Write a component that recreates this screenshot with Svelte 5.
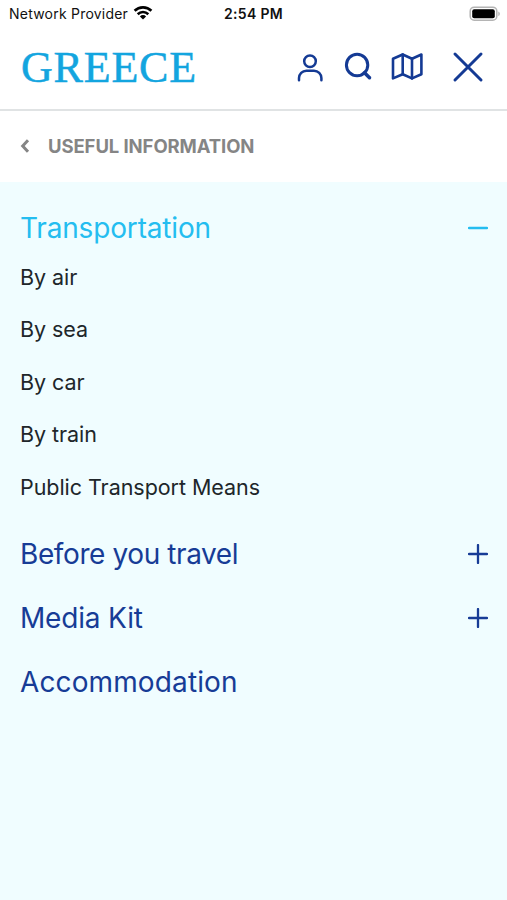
<script lang="ts">
  interface Section {
    title: string;
    expandable: boolean;
    fit: "snug" | "tight" | "loose";
    links: string[];
  }

  const sections: Section[] = [
    {
      title: "Transportation",
      expandable: true,
      fit: "snug",
      links: ["By air", "By sea", "By car", "By train", "Public Transport Means"],
    },
    { title: "Before you travel", expandable: true, fit: "tight", links: [] },
    { title: "Media Kit", expandable: true, fit: "snug", links: [] },
    { title: "Accommodation", expandable: false, fit: "loose", links: [] },
  ];

  let open = $state("Transportation");

  function toggle(title: string) {
    open = open === title ? "" : title;
  }
</script>

<div class="screen">
  <div class="status">
    <div class="carrier">
      <span>Network Provider</span>
      <svg width="20" height="15" viewBox="0 0 20 15" fill="none" stroke="#000" stroke-width="2.6">
        <path d="M1.6 5.8a12 12 0 0 1 16.8 0" />
        <path d="M4.7 9.2a7.6 7.6 0 0 1 10.6 0" />
        <path d="M10 14.4 6.9 11.4a4.4 4.4 0 0 1 6.2 0z" fill="#000" stroke="none" />
      </svg>
    </div>
    <span class="time">2:54 PM</span>
    <svg class="battery" width="32" height="16" viewBox="0 0 32 16">
      <rect x="1.2" y="1.2" width="26.6" height="13" rx="4" fill="#fff" stroke="#b4b4b4" stroke-width="1.5" />
      <rect x="3.2" y="3.2" width="22.6" height="9" rx="2" fill="#000" />
      <path d="M29.3 5.4c2 .8 2 3.8 0 4.6z" fill="#b4b4b4" />
    </svg>
  </div>

  <header>
    <div class="logo">GREECE</div>
    <nav>
      <button aria-label="Account">
        <svg width="28" height="32" viewBox="0 0 28 32" stroke-width="2.5">
          <circle cx="14" cy="10.2" r="5.8" />
          <path d="M3 29.3v-2.2a7.4 7.4 0 0 1 7.4-7.4h7.6a7.4 7.4 0 0 1 7.4 7.4v2.2" />
        </svg>
      </button>
      <button class="search" aria-label="Search">
        <svg width="28" height="32" viewBox="0 0 28 32" stroke-width="3">
          <circle cx="13.1" cy="14" r="10.7" />
          <path d="m20.5 21.7 5 5" stroke-width="3.5" />
        </svg>
      </button>
      <button class="map" aria-label="Map">
        <svg width="34" height="32" viewBox="0 0 34 32" stroke-width="2.6">
          <path d="M3 7.7 12.7 3.5l9.3 4.2L31.4 3.5v19.7L22 27.4l-9.3-4.2L3 27.4z" />
          <path d="M12.7 3.5v19.7M22 7.7v19.7" />
        </svg>
      </button>
      <button class="close" aria-label="Close">
        <svg width="32" height="32" viewBox="0 0 32 32" stroke-width="3">
          <path d="m3 3 26 26M29 3 3 29" />
        </svg>
      </button>
    </nav>
  </header>

  <div class="crumb">
    <svg width="10" height="14" viewBox="0 0 10 14" fill="none" stroke="#858585" stroke-width="3">
      <path d="M8 1.3 2.7 7 8 12.7" />
    </svg>
    <span>USEFUL INFORMATION</span>
  </div>

  <main>
    {#each sections as section (section.title)}
      {@const expanded = open === section.title}
      <section>
        <button class="heading" class:expanded onclick={() => toggle(section.title)}>
          <span class={section.fit}>{section.title}</span>
          {#if section.expandable}
            <svg width="20" height="20" viewBox="0 0 20 20" stroke-width="2.3">
              <path d={expanded ? "M1 10h18" : "M1 10h18M10 1v18"} />
            </svg>
          {/if}
        </button>
        {#if expanded && section.links.length}
          <ul>
            {#each section.links as link}
              <li>{link}</li>
            {/each}
          </ul>
        {/if}
      </section>
    {/each}
  </main>
</div>

<style>
  :global(body) {
    background: #fff;
  }
  .screen {
    display: flex;
    flex-direction: column;
    height: 900px;
    overflow: hidden;
    font-family: Inter, "Liberation Sans", sans-serif;
    color: #20262a;
  }
  button {
    display: flex;
    padding: 0;
    border: 0;
    background: none;
    font: inherit;
    color: inherit;
    cursor: pointer;
  }
  svg {
    display: block;
    flex: none;
  }
  button svg {
    fill: none;
    stroke: currentColor;
    stroke-linecap: round;
    stroke-linejoin: round;
  }

  .status {
    display: grid;
    grid-template-columns: 1fr auto 1fr;
    align-items: center;
    height: 27px;
    padding: 0 6px 0 9px;
    box-sizing: border-box;
    font-size: 14px;
    color: #111;
  }
  .carrier {
    display: flex;
    gap: 5px;
    letter-spacing: 0.22px;
  }
  .time {
    margin-right: 3px;
    font-weight: 600;
    letter-spacing: 0.3px;
  }
  .battery {
    justify-self: end;
  }

  header {
    display: flex;
    align-items: center;
    justify-content: space-between;
    height: 84px;
    padding: 0 23px 3px 21px;
    box-sizing: border-box;
    border-bottom: 2px solid #e0e3e4;
  }
  .logo {
    padding-top: 3px;
    font-family: "Liberation Serif", serif;
    font-size: 44px;
    line-height: 50px;
    letter-spacing: 0.8px;
    color: #13a5df;
    -webkit-text-stroke: 0.5px #13a5df;
  }
  nav {
    display: flex;
    align-items: center;
    color: #143a94;
  }
  .search {
    margin-left: 20px;
  }
  .map {
    margin-left: 18px;
  }
  .close {
    margin-left: 28px;
  }

  .crumb {
    display: flex;
    align-items: center;
    gap: 18px;
    height: 71px;
    padding: 0 0 2px 20px;
    box-sizing: border-box;
    font-size: 18.5px;
    font-weight: 700;
    letter-spacing: -0.09px;
    color: #858585;
  }

  main {
    flex: 1;
    padding: 14px 19px 0 20px;
    background: #f0fdff;
  }
  .heading {
    align-items: center;
    justify-content: space-between;
    width: 100%;
    height: 63.6px;
    font-size: 28px;
    color: #173c96;
  }
  .heading.expanded {
    color: #24bdf0;
  }
  .snug {
    letter-spacing: -0.17px;
  }
  .tight {
    letter-spacing: -0.4px;
  }
  .loose {
    letter-spacing: 0.12px;
  }
  ul {
    margin: -9px 0 0;
    padding: 0 0 9.5px;
    list-style: none;
  }
  li {
    height: 52.5px;
    font-size: 21.5px;
    line-height: 52.5px;
    letter-spacing: -0.05px;
  }
</style>
